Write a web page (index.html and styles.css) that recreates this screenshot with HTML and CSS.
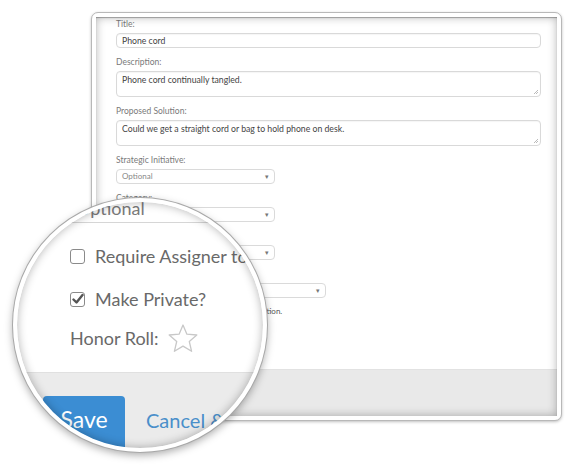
FILE: index.html
```html
<!DOCTYPE html>
<html lang="en">
<head>
  <meta charset="UTF-8" />
  <title>Suggestion - Edit</title>
  <link rel="stylesheet" href="styles.css">
</head>
<body>
  <div class="stage">
    <div class="frame">
      <div class="panel">
        <div class="form">
          <div class="field">
            <div class="label">Title:</div>
            <div class="input">Phone cord</div>
          </div>
          <div class="field">
            <div class="label">Description:</div>
            <div class="input area">Phone cord continually tangled.<span class="grip"></span></div>
          </div>
          <div class="field">
            <div class="label">Proposed Solution:</div>
            <div class="input area">Could we get a straight cord or bag to hold phone on desk.<span class="grip"></span></div>
          </div>
          <div class="field">
            <div class="label">Strategic Initiative:</div>
            <div class="select">Optional<span class="caret">▾</span></div>
          </div>
          <div class="field">
            <div class="label">Category:</div>
            <div class="select">Optional<span class="caret">▾</span></div>
          </div>
          <div class="field">
            <div class="label">Department:</div>
            <div class="select">Optional<span class="caret">▾</span></div>
          </div>
          <div class="field">
            <div class="label">Assigned To:</div>
            <div class="select wide">Optional<span class="caret">▾</span></div>
          </div>
          <div class="note">The assigner will approve or reject this solution.</div>
        </div>
        <div class="footer"></div>
      </div>
    </div>

    <div class="lens">
      <div class="zoom">
        <div class="big-select">Optional</div>
        <div class="check-row">
          <span class="box"></span>
          Require Assigner to Approve
        </div>
        <div class="check-row">
          <span class="box">
            <svg width="13" height="13" viewBox="0 0 13 13">
              <path d="M2.5 6.5 L5.5 9.5 L11.5 2" fill="none" stroke="#555" stroke-width="2.4" stroke-linecap="round" stroke-linejoin="round"/>
            </svg>
          </span>
          Make Private?
        </div>
        <div class="honor">
          Honor Roll:
          <svg class="star" width="32" height="31" viewBox="0 0 32 31">
            <path d="M16 2 L19.9 11.2 L29.8 12 L22.3 18.5 L24.6 28.3 L16 23.1 L7.4 28.3 L9.7 18.5 L2.2 12 L12.1 11.2 Z" fill="none" stroke="#c8c8c8" stroke-width="1.3" stroke-linejoin="round"/>
          </svg>
        </div>
        <div class="zoom-footer">
          <button class="save">Save</button>
          <a class="cancel" href="#">Cancel &amp; Close</a>
        </div>
      </div>
    </div>
  </div>
</body>
</html>
```

FILE: styles.css
```css
body {
  margin: 0;
  background: #fff;
  font-family: Lato, "Open Sans", sans-serif;
}
.stage {
  position: relative;
  width: 574px;
  height: 465px;
  overflow: hidden;
}
.frame {
  box-sizing: border-box;
  width: 471px;
  height: 409px;
  margin: 12px 0 0 91px;
  padding: 4px;
  background: #fff;
  border: 1px solid #b8b8b8;
  border-radius: 7px;
  box-shadow: 0 1px 3px rgba(0,0,0,0.25);
}
.panel {
  position: relative;
  height: 100%;
  display: flex;
  flex-direction: column;
  background: #fff;
}
.panel::after {
  content: "";
  position: absolute;
  inset: 0;
  box-shadow: inset 0 0 10px rgba(0,0,0,0.3), inset 0 1px 1px rgba(0,0,0,0.3);
  pointer-events: none;
}
.form {
  flex: 1;
  padding: 2px 16px 0 20px;
}
.field {
  margin-bottom: 9px;
}
.label {
  font-size: 8.5px;
  line-height: 10px;
  color: #7a7a7a;
  margin-bottom: 4px;
}
.input {
  position: relative;
  box-sizing: border-box;
  height: 15px;
  padding: 0 5px;
  border: 1px solid #d9d9d9;
  border-radius: 4px;
  font-size: 8.7px;
  line-height: 13px;
  color: #444;
  box-shadow: inset 0 1px 1px rgba(0,0,0,0.04);
}
.input.area {
  height: 26px;
  padding-top: 1px;
}
.grip {
  position: absolute;
  right: 2px;
  bottom: 2px;
  width: 4px;
  height: 4px;
  background: linear-gradient(135deg, transparent 45%, #bbb 50%, transparent 60%, transparent 70%, #bbb 75%, transparent 85%);
}
.select {
  position: relative;
  box-sizing: border-box;
  width: 159px;
  height: 15px;
  padding: 0 5px;
  border: 1px solid #dadada;
  border-radius: 4px;
  font-size: 8px;
  line-height: 13px;
  color: #888;
}
.select.wide {
  width: 210px;
}
.caret {
  position: absolute;
  right: 5px;
  top: 0;
  font-size: 7px;
  color: #777;
}
.note {
  margin-top: -1px;
  font-size: 8px;
  line-height: 10px;
  color: #555;
  white-space: nowrap;
}
.footer {
  height: 46px;
  background: #e9e9e9;
  border-top: 1px solid #e2e2e2;
}

/* magnifier */
.lens {
  position: absolute;
  left: 13px;
  top: 198px;
  box-sizing: border-box;
  width: 254px;
  height: 254px;
  border: 4px solid #fff;
  border-radius: 50%;
  overflow: hidden;
  background: #fff;
  box-shadow: 0 0 0 1px #a8a8a8, 0 3px 8px rgba(0,0,0,0.35);
}
.lens::after {
  content: "";
  position: absolute;
  inset: 0;
  border-radius: 50%;
  box-shadow: inset 0 0 10px rgba(0,0,0,0.3);
  pointer-events: none;
}
.zoom {
  padding-left: 53px;
  color: #696969;
  font-size: 18px;
}
.big-select {
  box-sizing: border-box;
  width: 320px;
  height: 34px;
  margin: -13px 0 0 -5px;
  padding: 8px 0 0 10px;
  border: 1.5px solid #d6d6d6;
  border-radius: 6px;
  line-height: 20px;
  color: #7a7a7a;
}
.check-row {
  display: flex;
  align-items: center;
  gap: 10px;
  height: 20px;
  margin-top: 23px;
  white-space: nowrap;
}
.box {
  box-sizing: border-box;
  display: flex;
  align-items: center;
  justify-content: center;
  flex: none;
  width: 15px;
  height: 15px;
  border: 1.5px solid #8a8a8a;
  border-radius: 3px;
}
.honor {
  display: flex;
  align-items: center;
  gap: 8px;
  height: 30px;
  margin-top: 14px;
  white-space: nowrap;
}
.zoom-footer {
  display: flex;
  align-items: flex-start;
  gap: 21px;
  height: 120px;
  margin: 19px 0 0 -53px;
  padding: 23px 0 0 26px;
  background: #ebebeb;
  border-top: 1px solid #e0e0e0;
}
.save {
  flex: none;
  width: 82px;
  height: 60px;
  padding: 10px 0 0;
  border: none;
  border-radius: 4px;
  background: #3b8dd3;
  color: #fff;
  font-family: Lato, sans-serif;
  font-size: 23px;
  line-height: 26px;
  display: flex;
  justify-content: center;
}
.cancel {
  padding-top: 12px;
  font-size: 20px;
  line-height: 24px;
  color: #4a8fca;
  text-decoration: none;
  white-space: nowrap;
}
```
